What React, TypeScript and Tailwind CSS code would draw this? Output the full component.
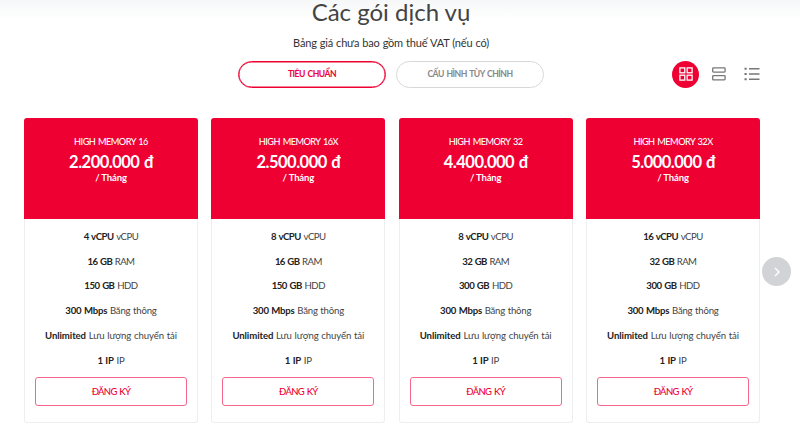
import { useState } from 'react'

const plans = [
  { name: 'HIGH MEMORY 16', price: '2.200.000 đ', cpu: '4 vCPU', ram: '16 GB', hdd: '150 GB' },
  { name: 'HIGH MEMORY 16X', price: '2.500.000 đ', cpu: '8 vCPU', ram: '16 GB', hdd: '150 GB' },
  { name: 'HIGH MEMORY 32', price: '4.400.000 đ', cpu: '8 vCPU', ram: '32 GB', hdd: '300 GB' },
  { name: 'HIGH MEMORY 32X', price: '5.000.000 đ', cpu: '16 vCPU', ram: '32 GB', hdd: '300 GB' },
]

function GridIcon() {
  return (
    <svg width="14" height="14" viewBox="0 0 14 14" fill="none" stroke="currentColor" strokeWidth="1.3">
      <rect x="0.9" y="0.9" width="4.9" height="4.9" />
      <rect x="8.2" y="0.9" width="4.9" height="4.9" />
      <rect x="0.9" y="8.2" width="4.9" height="4.9" />
      <rect x="8.2" y="8.2" width="4.9" height="4.9" />
    </svg>
  )
}

function RowsIcon() {
  return (
    <svg width="14" height="14" viewBox="0 0 14 14" fill="none" stroke="currentColor" strokeWidth="1.3">
      <rect x="0.7" y="0.9" width="12.4" height="4.2" rx="0.8" />
      <rect x="0.7" y="8.7" width="12.4" height="4.2" rx="0.8" />
    </svg>
  )
}

function ListIcon() {
  return (
    <svg width="16" height="14" viewBox="0 0 16 14" fill="none" stroke="currentColor" strokeWidth="1.4">
      <path d="M5 1.8h10.5M5 7h10.5M5 12.2h10.5" />
      <path d="M0.5 1.8h2.2M0.5 7h2.2M0.5 12.2h2.2" strokeWidth="2" />
    </svg>
  )
}

function PlanCard({ plan }: { plan: any }) {
  const rows = [
    [plan.cpu, 'vCPU', 'tracking-[-0.5px] [word-spacing:0.8px]'],
    [plan.ram, 'RAM', 'tracking-[-0.6px] [word-spacing:0.8px]'],
    [plan.hdd, 'HDD', 'tracking-[-0.5px] [word-spacing:0.8px]'],
    ['300 Mbps', 'Băng thông', 'tracking-[-0.2px] [word-spacing:0.4px]'],
    ['Unlimited', 'Lưu lượng chuyển tải', 'tracking-[-0.1px] [word-spacing:0.4px]'],
    ['1 IP', 'IP', 'tracking-[-0.2px] [word-spacing:0.4px]'],
  ]
  return (
    <div className="text-center">
      {/* Price */}
      <div className="h-[101px] rounded-t-[3px] bg-[#ee0033] pt-[17px] text-white">
        <div className="text-[9.2px] leading-[13px] font-medium tracking-[-0.55px] [word-spacing:1px] text-white">{plan.name}</div>
        <div className="mt-[4px] text-[16.5px] leading-[20px] font-bold tracking-[-0.5px] [word-spacing:1px]">{plan.price}</div>
        <div className="text-[9.5px] leading-[11px] font-bold tracking-[-0.15px]">/ Tháng</div>
      </div>

      {/* Specs */}
      <div className="h-[204px] rounded-b-[3px] border border-t-0 border-[#eeeeee] bg-white pt-[6px]">
        <div className="text-[9.6px] leading-[24.7px] text-[#444444]">
          {rows.map(([value, label, spacing]) => (
            <div key={label} className={`whitespace-nowrap ${spacing}`}>
              <span className="font-bold text-[#222222]">{value}</span> {label}
            </div>
          ))}
        </div>
        <button className="mt-[4px] h-[29px] w-[152px] rounded-[3px] border border-[#f4668a] text-[9.5px] font-medium tracking-[-0.7px] [word-spacing:1px] text-[#ee0033]">
          ĐĂNG KÝ
        </button>
      </div>
    </div>
  )
}

export default function App() {
  const [tab, setTab] = useState('standard')

  const tabClass = (active: boolean) =>
    active
      ? 'h-[27px] w-[148px] rounded-full border border-[#ee0033] pt-px text-[8.6px] font-bold tracking-[-0.5px] [word-spacing:1px] text-[#ee0033] inset-shadow-[0_0_0_0.5px_#ee0033]'
      : 'h-[27px] w-[148px] rounded-full border border-[#d8d8d8] pt-px text-[8.6px] font-bold tracking-[-0.5px] [word-spacing:1px] text-[#888888]'

  return (
    <main className="relative h-[430px] w-[800px] overflow-hidden bg-white bg-linear-to-b from-[#f6f7f8] to-white to-[20px] font-[Lato,'Noto_Sans',sans-serif]">
      <h2 className="h-[34px] pr-[18px] text-center text-[24px] leading-[24px] text-[#444444]">Các gói dịch vụ</h2>
      <p className="pr-[18px] text-center text-[11px] leading-[17px] tracking-[-0.2px] [word-spacing:0.5px] text-[#333333]">Bảng giá chưa bao gồm thuế VAT (nếu có)</p>

      {/* Tabs + view mode */}
      <div className="mt-[9px] flex h-[28px] items-center pl-[238px]">
        <div className="flex gap-[10px]">
          <button className={tabClass(tab === 'standard')} onClick={() => setTab('standard')}>TIÊU CHUẨN</button>
          <button className={tabClass(tab === 'custom')} onClick={() => setTab('custom')}>CẤU HÌNH TÙY CHỈNH</button>
        </div>
        <div className="ml-[128px] flex items-center text-[#777777]">
          <button className="flex size-[27px] items-center justify-center rounded-full bg-[#ee0033] text-white"><GridIcon /></button>
          <button className="ml-[13px]"><RowsIcon /></button>
          <button className="ml-[18px]"><ListIcon /></button>
        </div>
      </div>

      <div className="mt-[30px] ml-[24px] grid w-[736px] grid-cols-4 gap-x-[13.4px]">
        {plans.map(plan => <PlanCard key={plan.name} plan={plan} />)}
      </div>

      {/* Next slide */}
      <button className="absolute top-[257px] left-[762px] flex size-[29px] items-center justify-center rounded-full bg-[#d2d3d6] text-white">
        <svg width="6" height="10" viewBox="0 0 6 10" fill="none" stroke="currentColor" strokeWidth="1.4">
          <path d="M1 1l4 4-4 4" />
        </svg>
      </button>
    </main>
  )
}
